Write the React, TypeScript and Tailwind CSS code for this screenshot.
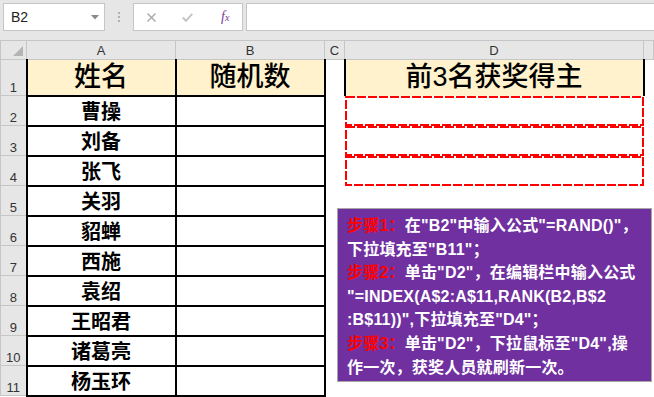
import { Fragment } from "react";

const NAMES = ["曹操", "刘备", "张飞", "关羽", "貂蝉", "西施", "袁绍", "王昭君", "诸葛亮", "杨玉环"];

const CJK = "font-['Liberation_Sans','Noto_Sans_CJK_SC',sans-serif]";

// Steps text, one entry per rendered line; red label prefix where present.
const LINES: { label?: string; text: string }[] = [
  { label: "步骤1：", text: "在\"B2\"中输入公式\"=RAND()\"，" },
  { text: "下拉填充至\"B11\"；" },
  { label: "步骤2：", text: "单击\"D2\"，在编辑栏中输入公式" },
  { text: "\"=INDEX(A$2:A$11,RANK(B2,B$2" },
  { text: ":B$11))\",下拉填充至\"D4\"；" },
  { label: "步骤3：", text: "单击\"D2\"，下拉鼠标至\"D4\",操" },
  { text: "作一次，获奖人员就刷新一次。" },
];

function RowHead({ n, h }: { n: number; h: string }) {
  return (
    <td
      className={`${h} border border-[#c6c6c6] bg-[#e6e6e6] p-0 pb-[1px] text-center align-bottom text-[13px] leading-none text-[#333]`}
    >
      {n}
    </td>
  );
}

// Red long-dash outline drawn over a winner cell.
function DashedBox() {
  return (
    <svg className="absolute inset-0 h-full w-full" aria-hidden>
      <rect
        x="1"
        y="1"
        width="calc(100% - 2px)"
        height="calc(100% - 2px)"
        fill="none"
        stroke="#ff0000"
        strokeWidth="2"
        strokeDasharray="9 2"
      />
    </svg>
  );
}

const HEAD =
  "border-2 border-t border-black border-t-[#c6c6c6] bg-[#fff2cc] p-0 text-center text-[27px] font-medium leading-none text-black";

export default function App() {
  return (
    <div className={`relative h-[397px] w-[654px] overflow-hidden bg-white ${CJK}`}>
      {/* Formula bar */}
      <div className="flex h-[40px] items-start bg-[#e6e6e6] pt-[3px]">
        <div className="ml-[3px] flex h-[28px] w-[102px] items-center justify-between border border-[#c6c6c6] bg-white pl-[7px] pr-[5px]">
          <span className="text-[14px] text-[#222]">B2</span>
          <svg width="8" height="5" viewBox="0 0 8 5" aria-hidden>
            <path d="M0 0 L8 0 L4 4.5 Z" fill="#8a8a8a" />
          </svg>
        </div>
        <div className="ml-[13px] flex h-[28px] flex-col items-center justify-center gap-[2px]">
          <span className="size-[2px] bg-[#b0b0b0]" />
          <span className="size-[2px] bg-[#b0b0b0]" />
          <span className="size-[2px] bg-[#b0b0b0]" />
        </div>
        <div className="ml-[13px] flex h-[28px] w-[110px] items-center border border-[#c6c6c6] bg-white">
          <svg className="ml-[13px]" width="9" height="9" viewBox="0 0 9 9" aria-hidden>
            <path d="M0.5 0.5 L8.5 8.5 M8.5 0.5 L0.5 8.5" stroke="#a8a8a8" strokeWidth="1.4" />
          </svg>
          <svg className="ml-[26px]" width="11" height="9" viewBox="0 0 11 9" aria-hidden>
            <path d="M0.8 4.5 L4 7.8 L10.3 0.8" stroke="#c4c4c4" strokeWidth="2" fill="none" />
          </svg>
          <span className="ml-[28px] font-['Liberation_Serif',serif] text-[14px] italic leading-none text-[#7a3b9e]">
            f<span className="text-[10px]">x</span>
          </span>
        </div>
        <div className="ml-[3px] h-[28px] flex-1 border border-r-0 border-[#c6c6c6] bg-white" />
      </div>

      {/* Sheet */}
      <table className="w-[654px] table-fixed border-collapse">
        <colgroup>
          <col className="w-[26px]" />
          <col className="w-[149px]" />
          <col className="w-[149px]" />
          <col className="w-[20px]" />
          <col className="w-[299px]" />
          <col />
        </colgroup>
        <tbody>
          <tr>
            <td className="relative h-[19px] border border-[#c6c6c6] bg-[#e6e6e6] p-0">
              <svg className="absolute bottom-[3px] right-[3px]" width="10" height="10" viewBox="0 0 10 10" aria-hidden>
                <path d="M10 0 L10 10 L0 10 Z" fill="#b4b4b4" />
              </svg>
            </td>
            {["A", "B", "C", "D", ""].map((c, i) => (
              <td
                key={i}
                className="h-[19px] border border-[#c6c6c6] bg-[#e6e6e6] p-0 text-center text-[13px] leading-none text-[#333]"
              >
                {c}
              </td>
            ))}
          </tr>
          <tr>
            <RowHead n={1} h="h-[36px]" />
            <td className={HEAD}>姓名</td>
            <td className={HEAD}>随机数</td>
            <td className="p-0" />
            <td className={`${HEAD} border-b-0`}>前3名获奖得主</td>
            <td className="p-0" />
          </tr>
          {NAMES.map((name, i) => (
            <tr key={name}>
              <RowHead n={i + 2} h="h-[30px]" />
              <td className="border-2 border-black p-0 pt-[2px] text-center text-[20px] font-bold leading-none text-black">
                {name}
              </td>
              <td className="border-2 border-black p-0" />
              <td className="p-0" />
              {i < 3 ? (
                <td className="relative p-0">
                  <DashedBox />
                </td>
              ) : (
                <td className="p-0" />
              )}
              <td className="p-0" />
            </tr>
          ))}
        </tbody>
      </table>

      {/* Floating instructions shape */}
      <div className="absolute left-[337px] top-[208px] h-[174px] w-[315px] border border-[#a6a6a6] bg-[#7030a0] pl-[9px] pt-[5px] text-[16px] font-bold leading-[23.6px] tracking-[0.2px] text-white">
        {LINES.map((l, i) => (
          <Fragment key={i}>
            <div className="whitespace-nowrap">
              {l.label && <span className="text-[#ff0000]">{l.label}</span>}
              {l.text}
            </div>
          </Fragment>
        ))}
      </div>
    </div>
  );
}
